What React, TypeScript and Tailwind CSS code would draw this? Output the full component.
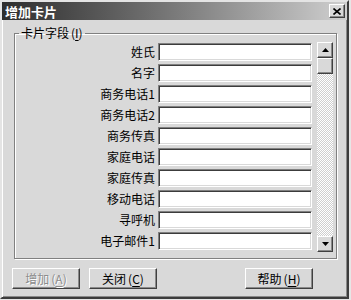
import React from "react";

const FIELDS = [
  "姓氏",
  "名字",
  "商务电话1",
  "商务电话2",
  "商务传真",
  "家庭电话",
  "家庭传真",
  "移动电话",
  "寻呼机",
  "电子邮件1",
];

const raised =
  "border border-t-white border-l-white border-b-[#404040] border-r-[#404040] shadow-[inset_-1px_-1px_0_#8a8a8a]";

function Mnemonic({ k }: { k: string }) {
  return (
    <span className="ml-[2px]">
      (<span className="underline underline-offset-2">{k}</span>)
    </span>
  );
}

function Button({
  children,
  disabled,
  className = "",
}: {
  children: React.ReactNode;
  disabled?: boolean;
  className?: string;
}) {
  return (
    <button
      className={`${raised} flex h-[21px] w-[68px] items-center justify-center bg-[#d9d9d9] text-[12px] leading-none ${
        disabled ? "text-[#8c8c8c] [text-shadow:1px_1px_0_#fff]" : "text-black"
      } ${className}`}
    >
      {children}
    </button>
  );
}

function ArrowButton({ down }: { down?: boolean }) {
  return (
    <div className={`${raised} flex h-[16px] w-[16px] items-center justify-center bg-[#d9d9d9]`}>
      <svg width="7" height="4" viewBox="0 0 7 4">
        {down ? (
          <path d="M0 0h7L3.5 4z" fill="#000" />
        ) : (
          <path d="M0 4h7L3.5 0z" fill="#000" />
        )}
      </svg>
    </div>
  );
}

export default function App() {
  return (
    <div
      className="h-[300px] w-[351px] bg-[#e6e6e6]"
      style={{ fontFamily: '"Noto Sans CJK SC", "Liberation Sans", sans-serif' }}
    >
      <div className="h-[299px] w-[349px] border-2 border-t-[#e4e4e4] border-l-[#e4e4e4] border-b-[#3c3c3c] border-r-[#3c3c3c] bg-[#d9d9d9] shadow-[inset_1px_1px_0_#fff,inset_-1px_-1px_0_#8a8a8a]">
        {/* title bar */}
        <div className="flex h-[18px] items-center justify-between bg-gradient-to-r from-[#2e2e2e] via-[#7a7a7a] to-[#d0d0d0] pl-[3px] pr-[2px]">
          <span className="text-[13px] font-bold leading-none text-white">增加卡片</span>
          <div className={`${raised} flex h-[14px] w-[16px] items-center justify-center bg-[#d9d9d9]`}>
            <svg width="8" height="7" viewBox="0 0 8 7">
              <path d="M0.5 0.5l7 6M7.5 0.5l-7 6" stroke="#000" strokeWidth="1.6" />
            </svg>
          </div>
        </div>

        {/* group box */}
        <fieldset className="ml-[12px] mt-[6px] w-[323px] border border-[#808080] pb-[6px] shadow-[inset_1px_1px_0_#fff,1px_1px_0_#fff]">
          <legend className="ml-[4px] px-[2px] text-[12px] leading-[14px] text-black">
            卡片字段<Mnemonic k="I" />
          </legend>
          <div className="flex items-start pt-[2px]">
            <div className="mt-px flex flex-col gap-[3px]">
              {FIELDS.map((f) => (
                <div key={f} className="flex items-center">
                  <span className="w-[140px] text-right text-[12px] leading-none text-black">{f}</span>
                  <div className="ml-[3px] h-[18px] w-[154px] border border-t-[#808080] border-l-[#808080] border-b-white border-r-white bg-white shadow-[inset_1px_1px_0_#3c3c3c,inset_-1px_-1px_0_#d9d9d9]" />
                </div>
              ))}
            </div>
            {/* scrollbar */}
            <div className="ml-[5px] flex h-[210px] w-[16px] flex-col bg-[image:repeating-conic-gradient(#fff_0_25%,#cfcfcf_0_50%)] bg-[length:2px_2px]">
              <ArrowButton />
              <div className={`${raised} h-[16px] w-[16px] bg-[#d9d9d9]`} />
              <div className="flex-1" />
              <ArrowButton down />
            </div>
          </div>
        </fieldset>

        {/* buttons */}
        <div className="ml-[10px] mt-[9px] flex">
          <Button disabled>
            增加<Mnemonic k="A" />
          </Button>
          <Button className="ml-[9px]">
            关闭<Mnemonic k="C" />
          </Button>
          <Button className="ml-[88px]">
            帮助<Mnemonic k="H" />
          </Button>
        </div>
      </div>
    </div>
  );
}
